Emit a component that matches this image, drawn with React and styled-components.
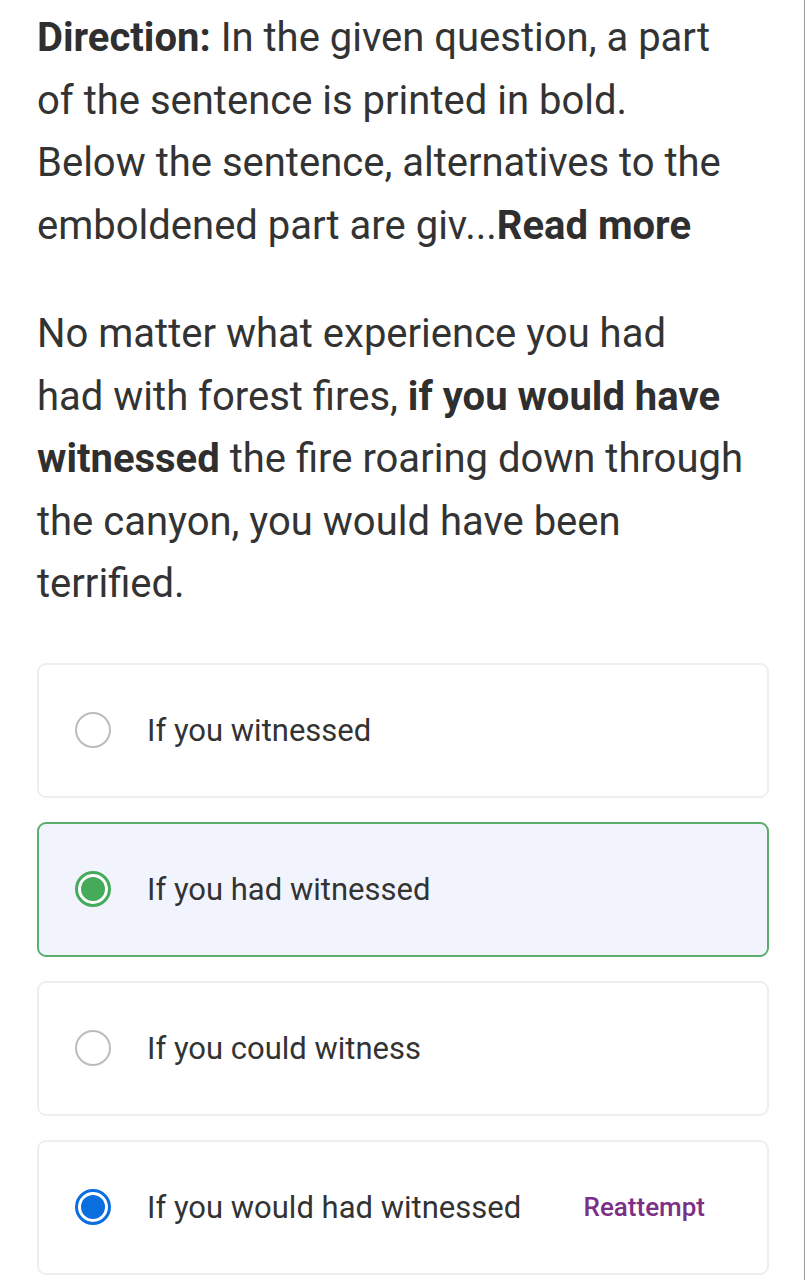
import React from "react";
import styled, { createGlobalStyle } from "styled-components";

const GlobalStyle = createGlobalStyle`
  html, body {
    margin: 0;
    padding: 0;
    background: #ffffff;
  }
  body {
    font-family: Roboto, "Noto Sans", Arial, sans-serif;
    color: #333333;
  }
`;

const Page = styled.div`
  width: 805px;
  min-height: 1280px;
  border-right: 1px solid #9a9a9a;
  box-sizing: border-box;
  padding: 7px 37px 0 37px;
`;

const Paragraph = styled.p`
  margin: 0 0 ${(p) => p.$gap || 0}px 0;
  font-size: 40px;
  line-height: 62.5px;
  color: #333333;
  white-space: nowrap;
`;

const Strong = styled.b`
  font-weight: 700;
  color: #2f2f2f;
`;

const ReadMore = styled.span`
  font-weight: 700;
  color: #2f2f2f;
`;

const Options = styled.div`
  display: flex;
  flex-direction: column;
  gap: 24px;
  width: 732px;
`;

const OptionCard = styled.div`
  display: flex;
  align-items: center;
  height: 135px;
  box-sizing: border-box;
  padding: 0 36px;
  border-radius: 9px;
  border: ${(p) => (p.$correct ? "2px solid #5cad6c" : "2px solid #eeeeee")};
  background: ${(p) => (p.$correct ? "#f2f4fd" : "#ffffff")};
`;

const Radio = styled.span`
  width: 36px;
  height: 36px;
  box-sizing: border-box;
  border-radius: 50%;
  flex-shrink: 0;
  display: flex;
  align-items: center;
  justify-content: center;
  border: ${(p) =>
    p.$color ? `3px solid ${p.$color}` : "2px solid #bcbcbc"};
  background: #ffffff;

  &::after {
    content: "";
    display: ${(p) => (p.$color ? "block" : "none")};
    width: 24px;
    height: 24px;
    border-radius: 50%;
    background: ${(p) => p.$color};
  }
`;

const OptionText = styled.span`
  margin-left: 36px;
  font-size: 31px;
  color: #333333;
`;

const Reattempt = styled.span`
  margin-left: auto;
  margin-right: 26px;
  font-size: 26px;
  font-weight: 500;
  color: #7b2f87;
`;

const options = [
  { text: "If you witnessed" },
  { text: "If you had witnessed", correct: true, radio: "#45ab5a" },
  { text: "If you could witness" },
  { text: "If you would had witnessed", radio: "#0b6edf", reattempt: true },
];

const App = () => (
  <>
    <GlobalStyle />
    <Page>
      <Paragraph $gap={46}>
        <Strong>Direction:</Strong> In the given question, a part
        <br />
        of the sentence is printed in bold.
        <br />
        Below the sentence, alternatives to the
        <br />
        emboldened part are giv...<ReadMore>Read more</ReadMore>
      </Paragraph>
      <Paragraph $gap={47}>
        No matter what experience you had
        <br />
        had with forest fires, <Strong>if you would have</Strong>
        <br />
        <Strong>witnessed</Strong> the fire roaring down through
        <br />
        the canyon, you would have been
        <br />
        terrified.
      </Paragraph>
      <Options>
        {options.map((o) => (
          <OptionCard key={o.text} $correct={o.correct}>
            <Radio $color={o.radio} />
            <OptionText>{o.text}</OptionText>
            {o.reattempt && <Reattempt>Reattempt</Reattempt>}
          </OptionCard>
        ))}
      </Options>
    </Page>
  </>
);

export default App;
